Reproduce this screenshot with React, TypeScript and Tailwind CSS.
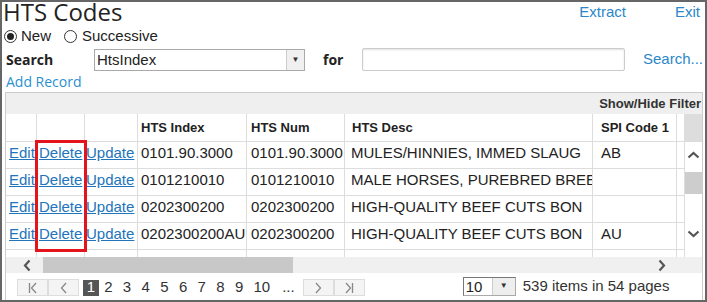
import React from 'react';

const rows = [
  ['0101.90.3000', '0101.90.3000', 'MULES/HINNIES, IMMED SLAUG', 'AB'],
  ['0101210010', '0101210010', 'MALE HORSES, PUREBRED BREE', ''],
  ['0202300200', '0202300200', 'HIGH-QUALITY BEEF CUTS BON', ''],
  ['0202300200AU', '0202300200', 'HIGH-QUALITY BEEF CUTS BON', 'AU'],
  ['', '', '', ''],
];

const gridCols = 'grid grid-cols-[31px_48px_53px_109px_98px_248px_84px_8px]';
const cell = 'border-r border-b border-[#ddd] overflow-hidden whitespace-nowrap flex items-center';

function Chevron({ dir, className }: { dir: 'up' | 'down' | 'left' | 'right'; className?: string }) {
  const pts = {
    up: '1.5,8.5 6.5,4 11.5,8.5',
    down: '1.5,4.5 6.5,9 11.5,4.5',
    left: '8.5,1.5 4,6.5 8.5,11.5',
    right: '4.5,1.5 9,6.5 4.5,11.5',
  }[dir];
  return (
    <svg width="13" height="13" viewBox="0 0 13 13" className={className}>
      <polyline points={pts} fill="none" stroke="#555" strokeWidth="2.2" />
    </svg>
  );
}

function Radio({ checked }: { checked?: boolean }) {
  return (
    <span className="w-[13px] h-[13px] rounded-full border border-[#333] bg-white flex items-center justify-center">
      {checked && <span className="w-[7px] h-[7px] rounded-full bg-[#222]" />}
    </span>
  );
}

function PagerBtn({ children }: { children: React.ReactNode }) {
  return (
    <span className="w-[31px] h-[17px] bg-[#f4f4f4] border border-[#ddd] flex items-center justify-center">
      {children}
    </span>
  );
}

export default function App() {
  return (
    <div className="relative w-[707px] h-[302px] border-2 border-[#666] bg-white overflow-hidden font-['Liberation_Sans',Arial,sans-serif] text-[#222]">
      {/* 标题行 */}
      <div className="flex items-start h-[24px]">
        <h1 className="pl-px font-['Open_Sans',sans-serif] text-[24px] leading-[20px] text-[#222]">HTS Codes</h1>
        <div className="ml-auto mt-px flex gap-[49px] pr-[5px] text-[15px] leading-[17px] text-[#2b87c8]">
          <span>Extract</span>
          <span>Exit</span>
        </div>
      </div>

      {/* 单选 */}
      <div className="flex items-center h-[21px] pl-[2px] text-[15px] text-[#222]">
        <Radio checked />
        <span className="ml-[4px]">New</span>
        <span className="ml-[13px]"><Radio /></span>
        <span className="ml-[5px]">Successive</span>
      </div>

      {/* 搜索 */}
      <div className="flex items-center h-[25px]">
        <span className="ml-[4px] w-[88px] font-['Open_Sans',sans-serif] font-bold text-[14px]">Search</span>
        <div className="w-[211px] h-[22px] border border-[#a9a9a9] flex">
          <span className="flex-1 pl-[2px] text-[15px] leading-[20px]">HtsIndex</span>
          <span className="w-[18px] bg-[#f0f0f0] border-l border-[#ccc] flex items-center justify-center text-[8px] text-[#333]">▼</span>
        </div>
        <span className="ml-[18px] w-[39px] font-['Open_Sans',sans-serif] font-bold text-[14px]">for</span>
        <div className="w-[263px] h-[23px] border border-[#ccc] rounded-[2px] shadow-[inset_0_1px_2px_rgba(0,0,0,0.12)]" />
        <span className="ml-[18px] text-[15px] text-[#2b87c8]">Search...</span>
      </div>

      {/* 新增 */}
      <div className="h-[20px] pl-[4px] font-['Open_Sans',sans-serif] text-[14px] leading-[20px] text-[#2b8fd0]">Add Record</div>

      {/* 表格 */}
      <div className="ml-[3px] mr-[2px] h-[210px] border border-[#ccc]">
        <div className="h-[21px] bg-[#efefef] flex items-center justify-end pr-px text-[13px] font-bold text-[#333]">
          Show/Hide Filter
        </div>

        <div className="flex h-[143px] overflow-hidden">
          <div className="w-[679px]">
            <div className={`${gridCols} h-[28px] text-[13px] font-bold`}>
              <div className={cell} />
              <div className={cell} />
              <div className={cell} />
              <div className={`${cell} pl-[3px]`}>HTS Index</div>
              <div className={`${cell} pl-[4px]`}>HTS Num</div>
              <div className={`${cell} pl-[7px]`}>HTS Desc</div>
              <div className={`${cell} pl-[8px]`}>SPI Code 1</div>
              <div className={cell} />
            </div>
            {rows.map((r, i) => (
              <div key={i} className={`${gridCols} h-[27px] text-[15px] shrink-0`}>
                <div className={`${cell} pl-[3px] pb-[3px]`}>
                  {i < 4 && <a className="underline text-[#2274bb]">Edit</a>}
                </div>
                <div className={`${cell} pl-[2px] pb-[3px]`}>
                  {i < 4 && <a className="underline text-[#2274bb]">Delete</a>}
                </div>
                <div className={`${cell} pl-px pb-[3px]`}>
                  {i < 4 && <a className="underline text-[#2274bb]">Update</a>}
                </div>
                <div className={`${cell} pl-[3px] pb-[3px]`}>{r[0]}</div>
                <div className={`${cell} pl-[4px] pb-[3px]`}>{r[1]}</div>
                <div className={`${cell} pl-[6px] pb-[3px]`}>{r[2]}</div>
                <div className={`${cell} pl-[8px] pb-[3px]`}>{r[3]}</div>
                <div className={cell} />
              </div>
            ))}
          </div>

          {/* 纵向滚动条 */}
          <div className="w-[17px] flex flex-col">
            <div className="h-[28px] bg-[#ddd]" />
            <div className="h-[27px] flex items-center justify-center">
              <Chevron dir="up" />
            </div>
            <div className="mt-[3px] h-[22px] bg-[#cdcdcd]" />
            <div className="h-[26px]" />
            <div className="h-[26px] flex items-center justify-center">
              <Chevron dir="down" />
            </div>
          </div>
        </div>

        {/* 横向滚动条 */}
        <div className="h-[16px] bg-[#f0f0f0] flex items-center">
          <span className="w-[37px] flex justify-center pl-[6px]">
            <Chevron dir="left" />
          </span>
          <span className="w-[250px] h-[16px] bg-[#c8c8c8]" />
          <span className="ml-auto mr-[34px]">
            <Chevron dir="right" />
          </span>
        </div>

        {/* 分页 */}
        <div className="flex items-start h-[26px] pl-[11px] text-[15px] text-[#333]">
          <div className="flex mt-[6px]">
            <PagerBtn>
              <svg width="12" height="12" viewBox="0 0 12 12">
                <line x1="2.5" y1="1" x2="2.5" y2="11" stroke="#888" strokeWidth="1.3" />
                <polyline points="9,1 4.5,6 9,11" fill="none" stroke="#888" strokeWidth="1.3" />
              </svg>
            </PagerBtn>
            <PagerBtn>
              <svg width="12" height="12" viewBox="0 0 12 12">
                <polyline points="8,1 3.5,6 8,11" fill="none" stroke="#888" strokeWidth="1.3" />
              </svg>
            </PagerBtn>
          </div>
          <div className="flex items-center mt-[6px] ml-[4px] h-[17px]">
            <span className="w-[16px] h-[16px] bg-[#555] text-white flex items-center justify-center">1</span>
            {['2', '3', '4', '5', '6', '7', '8', '9'].map((n) => (
              <span key={n} className="w-[18.7px] text-center">{n}</span>
            ))}
            <span className="ml-[5px]">10</span>
            <span className="ml-[12px]">...</span>
          </div>
          <div className="flex mt-[6px] ml-[8px]">
            <PagerBtn>
              <svg width="12" height="12" viewBox="0 0 12 12">
                <polyline points="4,1 8.5,6 4,11" fill="none" stroke="#888" strokeWidth="1.3" />
              </svg>
            </PagerBtn>
            <PagerBtn>
              <svg width="12" height="12" viewBox="0 0 12 12">
                <polyline points="3,1 7.5,6 3,11" fill="none" stroke="#888" strokeWidth="1.3" />
                <line x1="9.5" y1="1" x2="9.5" y2="11" stroke="#888" strokeWidth="1.3" />
              </svg>
            </PagerBtn>
          </div>
          <div className="ml-[98px] mt-[2px] flex items-center">
            <div className="flex h-[19px] border border-[#aaa] border-t-[#777] border-l-[#777]">
              <span className="w-[28px] pl-[2px] leading-[17px] bg-white text-[#222]">10</span>
              <span className="w-[23px] bg-[#eee] border-l border-[#ccc] flex items-center justify-center text-[8px] text-[#333]">▼</span>
            </div>
            <span className="ml-[7px]">539 items in 54 pages</span>
          </div>
        </div>
      </div>

      {/* 红框标注 */}
      <div className="absolute left-[33px] top-[138px] w-[52px] h-[112px] border-[3px] border-[#e3141b]" />
    </div>
  );
}
